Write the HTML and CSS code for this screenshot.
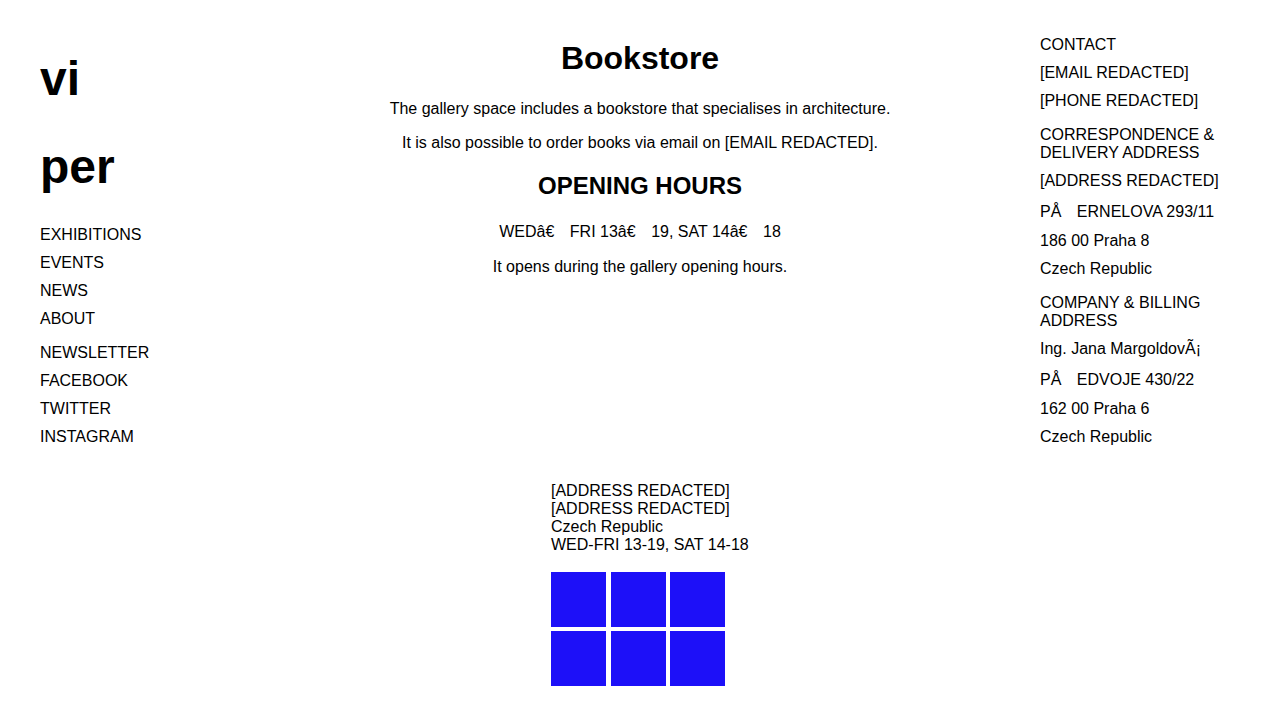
FILE: index.html
```html
<!DOCTYPE html>
<html lang="en">
<head>
<meta charset="utf-8">
<title>Bookstore</title>
<link rel="stylesheet" href="styles.css">
</head>
<body>
<div class="page">
  <div class="top">
    <aside class="left">
      <h1 class="logo">vi per</h1>
      <nav class="group">
        <div class="item">EXHIBITIONS</div>
        <div class="item">EVENTS</div>
        <div class="item">NEWS</div>
        <div class="item">ABOUT</div>
      </nav>
      <div class="group">
        <div class="item">NEWSLETTER</div>
        <div class="item">FACEBOOK</div>
        <div class="item">TWITTER</div>
        <div class="item">INSTAGRAM</div>
      </div>
    </aside>
    <main class="center">
      <h1 class="title">Bookstore</h1>
      <p>The gallery space includes a bookstore that specialises in architecture.</p>
      <p>It is also possible to order books via email on [EMAIL REDACTED].</p>
      <h2 class="subtitle">OPENING HOURS</h2>
      <p class="tall-center">WEDâ€<span class="gap"></span>FRI 13â€<span class="gap"></span>19, SAT 14â€<span class="gap"></span>18</p>
      <p>It opens during the gallery opening hours.</p>
    </main>
    <aside class="right">
      <div class="group">
        <div class="item">CONTACT</div>
        <div class="item">[EMAIL REDACTED]</div>
        <div class="item">[PHONE REDACTED]</div>
      </div>
      <div class="group">
        <div class="item">CORRESPONDENCE &amp; DELIVERY ADDRESS</div>
        <div class="item">[ADDRESS REDACTED]</div>
        <div class="item tall">PÅ<span class="gap"></span>ERNELOVA 293/11</div>
        <div class="item">186 00 Praha 8</div>
        <div class="item">Czech Republic</div>
      </div>
      <div class="group">
        <div class="item">COMPANY &amp; BILLING ADDRESS</div>
        <div class="item">Ing. Jana MargoldovÃ¡</div>
        <div class="item tall">PÅ<span class="gap"></span>EDVOJE 430/22</div>
        <div class="item">162 00 Praha 6</div>
        <div class="item">Czech Republic</div>
      </div>
    </aside>
  </div>
  <footer class="footer">
    <div class="footer-text">
      <div>[ADDRESS REDACTED]</div>
      <div>[ADDRESS REDACTED]</div>
      <div>Czech Republic</div>
      <div>WED-FRI 13-19, SAT 14-18</div>
    </div>
    <div class="tiles">
      <span class="tile"></span>
      <span class="tile"></span>
      <span class="tile"></span>
      <span class="tile"></span>
      <span class="tile"></span>
      <span class="tile"></span>
    </div>
  </footer>
</div>
</body>
</html>
```
FILE: styles.css
```css
html, body {
  margin: 0;
  padding: 0;
  background: #ffffff;
}

body {
  font-family: "Liberation Sans", Arial, sans-serif;
  font-size: 16px;
  color: #000000;
}

.page {
  padding: 36px 40px 0;
}

.top {
  display: grid;
  grid-template-columns: 200px 1fr 200px;
}

.logo {
  width: min-content;
  margin: -1px 0 15px;
  font-size: 48px;
  font-weight: bold;
  line-height: 88px;
}

.group {
  margin: 0 0 16px;
}

.item {
  margin: 0 0 10px;
}

.item.tall {
  padding-top: 2.5px;
  padding-bottom: 1.5px;
}

.gap {
  display: inline-block;
  width: 15.5px;
}

.center {
  text-align: center;
}

.title {
  font-size: 32px;
  font-weight: bold;
  margin: 4px 0 23px;
}

.center p {
  margin: 16px 0;
}

.subtitle {
  font-size: 24px;
  font-weight: bold;
  margin: 20px 0;
}

.center p.tall-center {
  padding-top: 2.5px;
  padding-bottom: 1.5px;
}

.footer {
  width: 178px;
  margin: 20px auto 0;
}

.footer-text {
  line-height: 18px;
  white-space: nowrap;
}

.tiles {
  display: grid;
  grid-template-columns: repeat(3, 55px);
  grid-auto-rows: 55px;
  column-gap: 4.5px;
  row-gap: 4px;
  margin-top: 18px;
}

.tile {
  display: block;
  background: #1d10f8;
}
```
